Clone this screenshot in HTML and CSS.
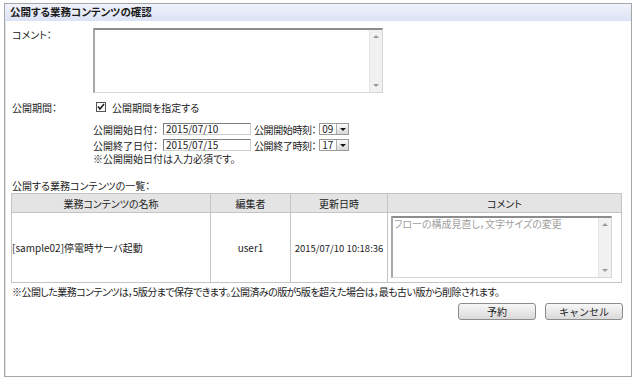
FILE: index.html
```html
<!DOCTYPE html>
<html lang="ja">
<head>
    <meta charset="UTF-8">
    <title>公開する業務コンテンツの確認</title>
    <link rel="stylesheet" href="styles.css">
</head>
<body>
    <div class="panel">
        <div class="panel-title">公開する業務コンテンツの確認</div>
        <div class="panel-body">
            <div class="field">
                <div class="label">コメント：</div>
                <div class="textbox comment-box">
                    <div class="textbox-text"></div>
                    <div class="scrollbar"><span class="arrow up"></span><span class="arrow down"></span></div>
                </div>
            </div>

            <div class="field period">
                <div class="label">公開期間：</div>
                <div class="period-body">
                    <div class="check">
                        <span class="box">
                            <svg width="8" height="8" viewBox="0 0 8 8"><path d="M1 3.5 L3 6 L7 1" fill="none" stroke="#222" stroke-width="1.6"/></svg>
                        </span>
                        公開期間を指定する
                    </div>
                    <div class="date-row">
                        <span class="date-label">公開開始日付：</span>
                        <span class="input">2015/07/10</span>
                        <span class="time-label">公開開始時刻：</span>
                        <span class="select"><span class="select-val">09</span><span class="select-btn"></span></span>
                    </div>
                    <div class="date-row">
                        <span class="date-label">公開終了日付：</span>
                        <span class="input">2015/07/15</span>
                        <span class="time-label">公開終了時刻：</span>
                        <span class="select"><span class="select-val">17</span><span class="select-btn"></span></span>
                    </div>
                    <div class="note">※公開開始日付は入力必須です。</div>
                </div>
            </div>

            <div class="list-label">公開する業務コンテンツの一覧：</div>
            <table class="list">
                <tr>
                    <th class="col-name">業務コンテンツの名称</th>
                    <th class="col-editor">編集者</th>
                    <th class="col-date">更新日時</th>
                    <th>コメント</th>
                </tr>
                <tr>
                    <td class="name">[sample02]停電時サーバ起動</td>
                    <td class="center">user1</td>
                    <td class="center date">2015/07/10 10:18:36</td>
                    <td class="comment-cell">
                        <div class="textbox row-box">
                            <div class="textbox-text gray">フローの構成見直し，文字サイズの変更</div>
                            <div class="scrollbar"><span class="arrow up"></span><span class="arrow down"></span></div>
                        </div>
                    </td>
                </tr>
            </table>

            <p class="footnote">※公開した業務コンテンツは，5版分まで保存できます。公開済みの版が5版を超えた場合は，最も古い版から削除されます。</p>

            <div class="buttons">
                <button type="button">予約</button>
                <button type="button">キャンセル</button>
            </div>
        </div>
    </div>
</body>
</html>
```

FILE: styles.css
```css
body {
    margin: 0;
    background-color: #ffffff;
    font-family: 'Noto Sans CJK JP', 'Noto Sans', sans-serif;
    font-size: 10px;
    color: #222;
    font-feature-settings: "palt";
}
.panel {
    margin: 3px 4px 0 4px;
    width: 626px;
    height: 372px;
    border: 1px solid #a6a6a6;
    box-shadow: inset 1px 1px 0 #e2e2e2;
}
.panel-title {
    height: 17px;
    line-height: 16px;
    padding-left: 5px;
    font-weight: bold;
    font-size: 10.5px;
    color: #1a1a1a;
    background: linear-gradient(#f1f3fb, #dbe2f5);
}
.panel-body {
    padding: 7px 8px 0 7px;
}
.field {
    display: flex;
}
.label {
    width: 81px;
    line-height: 11px;
    padding-top: 1px;
}
/* fake textarea */
.textbox {
    display: flex;
    box-sizing: border-box;
    border-top: 2px solid #8c8c8c;
    border-left: 2px solid #a8a8a8;
    border-right: 1px solid #d6d6d6;
    border-bottom: 1px solid #d6d6d6;
    background: #fff;
}
.comment-box {
    width: 290px;
    height: 65px;
}
.textbox-text {
    flex: 1;
    line-height: 12px;
    padding-left: 1px;
}
.gray {
    color: #a0a0a0;
}
.scrollbar {
    width: 12px;
    background: #f1f1f1;
    border-left: 1px solid #e4e4e4;
    display: flex;
    flex-direction: column;
    justify-content: space-between;
    align-items: center;
    padding: 5px 0 5px 0;
}
.arrow {
    width: 0;
    height: 0;
    border-left: 3px solid transparent;
    border-right: 3px solid transparent;
}
.arrow.up {
    border-bottom: 3px solid #9a9a9a;
}
.arrow.down {
    border-top: 3px solid #9a9a9a;
}
.period {
    margin-top: 8px;
}
.period-body {
    display: flex;
    flex-direction: column;
}
.check {
    display: flex;
    align-items: center;
    gap: 6px;
    height: 12px;
    padding-left: 3px;
}
.box {
    width: 8px;
    height: 8px;
    border: 1px solid #555;
    display: flex;
    align-items: center;
    justify-content: center;
    background: #fff;
}
.date-row {
    display: flex;
    align-items: center;
    height: 16px;
}
.check + .date-row {
    margin-top: 8px;
}
.date-label {
    width: 70px;
}
.input {
    box-sizing: border-box;
    width: 88px;
    height: 12px;
    line-height: 10px;
    padding-left: 2px;
    border-top: 1px solid #7e7e7e;
    border-left: 1px solid #7e7e7e;
    border-right: 1px solid #cfcfcf;
    border-bottom: 1px solid #cfcfcf;
    font-feature-settings: normal;
}
.time-label {
    margin-left: 3px;
    margin-right: 3px;
    white-space: nowrap;
    letter-spacing: -0.4px;
}
.select {
    display: flex;
    box-sizing: border-box;
    height: 12px;
    border: 1px solid #9a9a9a;
    background: #fff;
}
.select-val {
    width: 14px;
    line-height: 10px;
    padding-left: 2px;
    font-feature-settings: normal;
}
.select-btn {
    width: 11px;
    background: linear-gradient(#fafafa, #d8d8d8);
    border-left: 1px solid #b0b0b0;
    position: relative;
}
.select-btn::after {
    content: "";
    position: absolute;
    left: 3px;
    top: 4px;
    border-left: 3px solid transparent;
    border-right: 3px solid transparent;
    border-top: 3px solid #111;
}
.note {
    line-height: 12px;
}
.list-label {
    margin-top: 15px;
    line-height: 12px;
}
.list {
    margin: 1px 0 0 -1px;
    width: 611px;
    border-collapse: collapse;
    border: 1px solid #c4c4c4;
}
.list th {
    height: 18px;
    padding: 0;
    font-weight: normal;
    background: #e4e4e4;
    border: 1px solid #c4c4c4;
}
.list td {
    height: 65px;
    padding: 0;
    border: 1px solid #c4c4c4;
}
.col-name {
    width: 198px;
}
.col-editor {
    width: 79px;
}
.col-date {
    width: 96px;
}
.name {
    padding-left: 1px;
}
.center {
    text-align: center;
}
.date {
    font-size: 9.5px;
}
.list td.comment-cell {
    padding: 1px 9px 3px 3px;
}
.row-box {
    height: 62px;
}
.footnote {
    margin: 3px 0 0 0;
    line-height: 12px;
    letter-spacing: -0.55px;
}
.buttons {
    display: flex;
    justify-content: flex-end;
    gap: 9px;
    margin-top: 5px;
}
button {
    width: 78px;
    height: 17px;
    padding: 0;
    font-family: inherit;
    font-size: 10px;
    color: #222;
    border: 1px solid #8c8c8c;
    border-radius: 3px;
    background: linear-gradient(#f7f7f7, #dadada);
}
```
